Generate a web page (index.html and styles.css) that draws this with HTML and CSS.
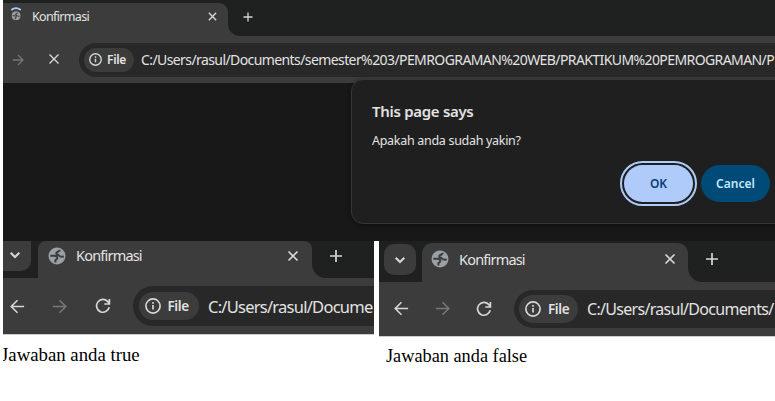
FILE: index.html
```
<!DOCTYPE html>
<html lang="id">
<head>
<meta charset="utf-8">
<title>Konfirmasi</title>
<link rel="stylesheet" href="styles.css">
</head>
<body>
<svg class="defs" width="0" height="0">
  <symbol id="close" viewBox="0 0 16 16"><path d="M3.5 3.5l9 9M12.5 3.5l-9 9"/></symbol>
  <symbol id="plus" viewBox="0 0 16 16"><path d="M8 2v12M2 8h12"/></symbol>
  <symbol id="chevron" viewBox="0 0 16 16"><path d="M3.7 5.8L8 10.1l4.3-4.3"/></symbol>
  <symbol id="back" viewBox="0 0 16 16"><path d="M15 8H1.5M8 1.3L1.3 8 8 14.7"/></symbol>
  <symbol id="forward" viewBox="0 0 16 16"><path d="M1 8h13.5M8 1.3L14.7 8 8 14.7"/></symbol>
  <symbol id="reload" viewBox="0 0 16 16"><path d="M14.2 9.3A6.4 6.4 0 1 1 12.6 3.4L14 5M14.4 1v5H9.3"/></symbol>
  <symbol id="info" viewBox="0 0 16 16"><circle cx="8" cy="8" r="7.1"/><path d="M8 7v4.5M8 4.1v1.7"/></symbol>
  <symbol id="globe" viewBox="0 0 18 18"><circle cx="9" cy="9" r="8.5" fill="#9aa0a6" stroke="none"/><path d="M11.8 2.8C11.8 5 8.4 4.4 8.2 6.2c0 1.8 2.2 1.2 3 2.6.7 1.1 2.6 1 4.6.8M2.3 8.8h3.6c2.6 0 3.6 1.2 3.4 2.6-.2 1-1.8.8-1.9 2v2" fill="none" stroke="#3c3c3c" stroke-width="2"/></symbol>
</svg>
<main>
  <section class="window top">
    <div class="strip">
      <div class="tabwrap"><div class="tab">
        <svg class="loading" viewBox="0 0 12 16"><path d="M1.2 4Q6 .2 10.8 4" fill="none" stroke="#a8c7fa" stroke-width="1.8"/><svg x="1.3" y="5" width="9.6" height="9.6"><use href="#globe"/></svg></svg>
        <span class="title">Konfirmasi</span><svg class="ic x"><use href="#close"/></svg>
      </div></div>
      <div class="rest"><svg class="ic plus"><use href="#plus"/></svg></div>
    </div>
    <div class="toolbar">
      <svg class="ic dim nav1"><use href="#forward"/></svg><svg class="ic nav2"><use href="#close"/></svg>
      <div class="omni"><div class="chip"><svg class="ic info"><use href="#info"/></svg><b>File</b></div><span class="url">C:/Users/rasul/Documents/semester%203/PEMROGRAMAN%20WEB/PRAKTIKUM%20PEMROGRAMAN/P</span></div>
    </div>
    <div class="dialog">
      <h1>This page says</h1>
      <p>Apakah anda sudah yakin?</p>
      <div class="actions"><button class="ok">OK</button><button class="cancel">Cancel</button></div>
    </div>
  </section>
  <div class="results">
    <section class="window left">
      <div class="strip">
        <div class="tabwrap"><div class="menu"><svg class="ic chev"><use href="#chevron"/></svg></div><div class="tab"><svg class="globe"><use href="#globe"/></svg><span class="title">Konfirmasi</span><svg class="ic x"><use href="#close"/></svg></div></div>
        <div class="rest"><svg class="ic plus"><use href="#plus"/></svg></div>
      </div>
      <div class="toolbar">
        <svg class="ic nav"><use href="#back"/></svg><svg class="ic nav dim"><use href="#forward"/></svg><svg class="ic nav reload"><use href="#reload"/></svg>
        <div class="omni"><div class="chip"><svg class="ic info"><use href="#info"/></svg><b>File</b></div><span class="url">C:/Users/rasul/Docume</span></div>
      </div>
      <div class="page">Jawaban anda true</div>
    </section>
    <section class="window right">
      <div class="strip">
        <div class="tabwrap"><div class="menu"><svg class="ic chev"><use href="#chevron"/></svg></div><div class="tab"><svg class="globe"><use href="#globe"/></svg><span class="title">Konfirmasi</span><svg class="ic x"><use href="#close"/></svg></div></div>
        <div class="rest"><svg class="ic plus"><use href="#plus"/></svg></div>
      </div>
      <div class="toolbar">
        <svg class="ic nav"><use href="#back"/></svg><svg class="ic nav dim"><use href="#forward"/></svg><svg class="ic nav reload"><use href="#reload"/></svg>
        <div class="omni"><div class="chip"><svg class="ic info"><use href="#info"/></svg><b>File</b></div><span class="url">C:/Users/rasul/Documents/</span></div>
      </div>
      <div class="page">Jawaban anda false</div>
    </section>
  </div>
</main>
</body>
</html>
```
FILE: styles.css
```
* { box-sizing: border-box; }
body { margin: 0; background: #fff; font-family: "Noto Sans", sans-serif; color: #e3e3e3; }
main { width: 775px; height: 401px; padding-left: 3px; overflow: hidden; }
.defs { position: absolute; }
svg { flex: none; display: block; }
.window { overflow: hidden; white-space: nowrap; }
.ic { fill: none; stroke: #d6d6d6; stroke-width: 1.7; width: 16px; height: 16px; }
.dim { stroke: #777; }
.chev { stroke-width: 2.1; }
.strip { display: flex; background: #3c3c3c; }
.tabwrap { display: flex; flex: none; background: #1f2120; }
.tab { display: flex; align-items: center; background: #3c3c3c; }
.rest { flex: 1; display: flex; align-items: center; background: #1f2120; border-bottom-left-radius: 12px; }
.toolbar { display: flex; align-items: center; background: #3c3c3c; }
.omni { flex: 1; min-width: 0; display: flex; align-items: center; background: #282828; }
.chip { flex: none; display: flex; align-items: center; background: #3c3c3c; border-radius: 14px; }
.chip b { font-weight: 600; }
.title { flex: 1; }
.menu { display: flex; align-items: center; justify-content: center; background: #3c3c3c; }

.top { position: relative; height: 241px; background: #181818; }
.top .strip { height: 36px; }
.top .tabwrap { padding-top: 3px; }
.top .tab { width: 225px; border-top-right-radius: 9px; padding: 0 9.5px 6px 7px; }
.top .loading { width: 12px; height: 16px; margin: -5px 10px 0 0; }
.top .title { font-size: 12.5px; letter-spacing: -.65px; }
.top .x { width: 13px; height: 13px; }
.top .rest { padding: 0 0 3px 14px; }
.top .plus { width: 12px; height: 12px; }
.top .toolbar { height: 47px; padding-left: 9px; }
.top .nav1 { width: 12px; height: 12px; margin-right: 22px; }
.top .nav2 { width: 16px; height: 16px; stroke-width: 1.4; margin: -1px 17px 0 0; }
.top .omni { height: 34px; border-radius: 17px 0 0 17px; padding-left: 5px; }
.top .chip { width: 50px; height: 24px; padding-left: 5px; margin-right: 7px; font-size: 12px; letter-spacing: -.3px; }
.top .info { width: 13px; height: 13px; margin-right: 5px; }
.top .url { font-size: 14px; letter-spacing: -.59px; }

.dialog { position: absolute; left: 348px; top: 79px; width: 450px; height: 145px; background: #1f1f1f; border: 1px solid #363636; border-radius: 12px; padding: 20px 30px 0 20px; box-shadow: 0 1px 4px #0006; }
.dialog h1 { margin: 0; font-size: 15px; line-height: 22px; font-weight: 600; letter-spacing: -.3px; }
.dialog p { margin: 9px 0 0; font-size: 12.5px; line-height: 19px; letter-spacing: -.3px; }
.actions { display: flex; justify-content: flex-end; gap: 8px; margin-top: 15px; }
.actions button { font: 600 12px "Noto Sans", sans-serif; width: 69px; height: 37px; border: 0; border-radius: 19px; padding: 0; }
.ok { background: #aecbfa; color: #0b3b78; outline: 2px solid #aecbfa; outline-offset: 2px; }
.cancel { background: #004a77; color: #c2e7ff; }

.results { display: flex; gap: 5px; height: 160px; }
.left { width: 371px; }
.right { width: 396px; }
.left .strip { height: 37px; }
.left .menu { width: 28px; height: 30px; margin-right: 7px; border-radius: 0 0 10px 0; padding: 0 4px 2px 0; }
.left .tab { width: 274px; border-radius: 8px 8px 0 0; padding: 0 11px 8px 10px; }
.globe { width: 18px; height: 18px; }
.left .globe { margin-right: 10px; }
.left .title, .right .title { font-size: 14.5px; letter-spacing: -.8px; }
.left .title { margin-top: -2px; }
.left .rest { padding: 0 0 8px 16px; border-bottom-left-radius: 14px; }
.left .toolbar { height: 56px; padding-left: 6.5px; }
.nav { width: 15px; height: 15px; }
.left .nav { margin-right: 27.5px; }
.left .omni { height: 40px; border-radius: 20px 0 0 20px; padding-left: 6px; }
.left .reload, .right .reload { margin-right: 22px; width: 16px; height: 16px; }
.left .chip { width: 60px; height: 28px; padding-left: 6px; margin-right: 9.5px; font-size: 13.5px; letter-spacing: -.4px; }
.left .info, .right .info { width: 16px; height: 16px; margin-right: 7px; }
.left .url { font-size: 16.5px; letter-spacing: -.75px; }
.page { color: #000; font-family: "Liberation Serif", serif; border-top: 1px solid #ccc; }
.left .page { font-size: 18.8px; padding: 9px 0; margin-left: -2px; }

.right .strip { height: 41px; }
.right .tabwrap { padding: 2px 0 0 5px; }
.right .menu { width: 32px; height: 31px; margin: 1px 6px 0 0; border-radius: 10px; }
.right .tab { width: 266px; border-radius: 10px 10px 0 0; padding: 0 10.5px 7px 9px; }
.right .globe { margin-right: 10px; }
.right .rest { padding: 0 0 5px 15.5px; border-bottom-left-radius: 14px; }
.right .toolbar { height: 54px; padding: 0 0 1px 15px; }
.right .nav { margin-right: 26px; }
.right .toolbar .reload { margin-right: 22px; }
.right .omni { height: 38px; border-radius: 19px 0 0 19px; padding-left: 5px; }
.right .chip { width: 59px; height: 28px; padding-left: 6px; margin-right: 9px; font-size: 13.5px; letter-spacing: -.4px; }
.right .url { font-size: 16px; letter-spacing: -.7px; }
.right .page { font-size: 18.3px; padding: 9px 7px; }
```
